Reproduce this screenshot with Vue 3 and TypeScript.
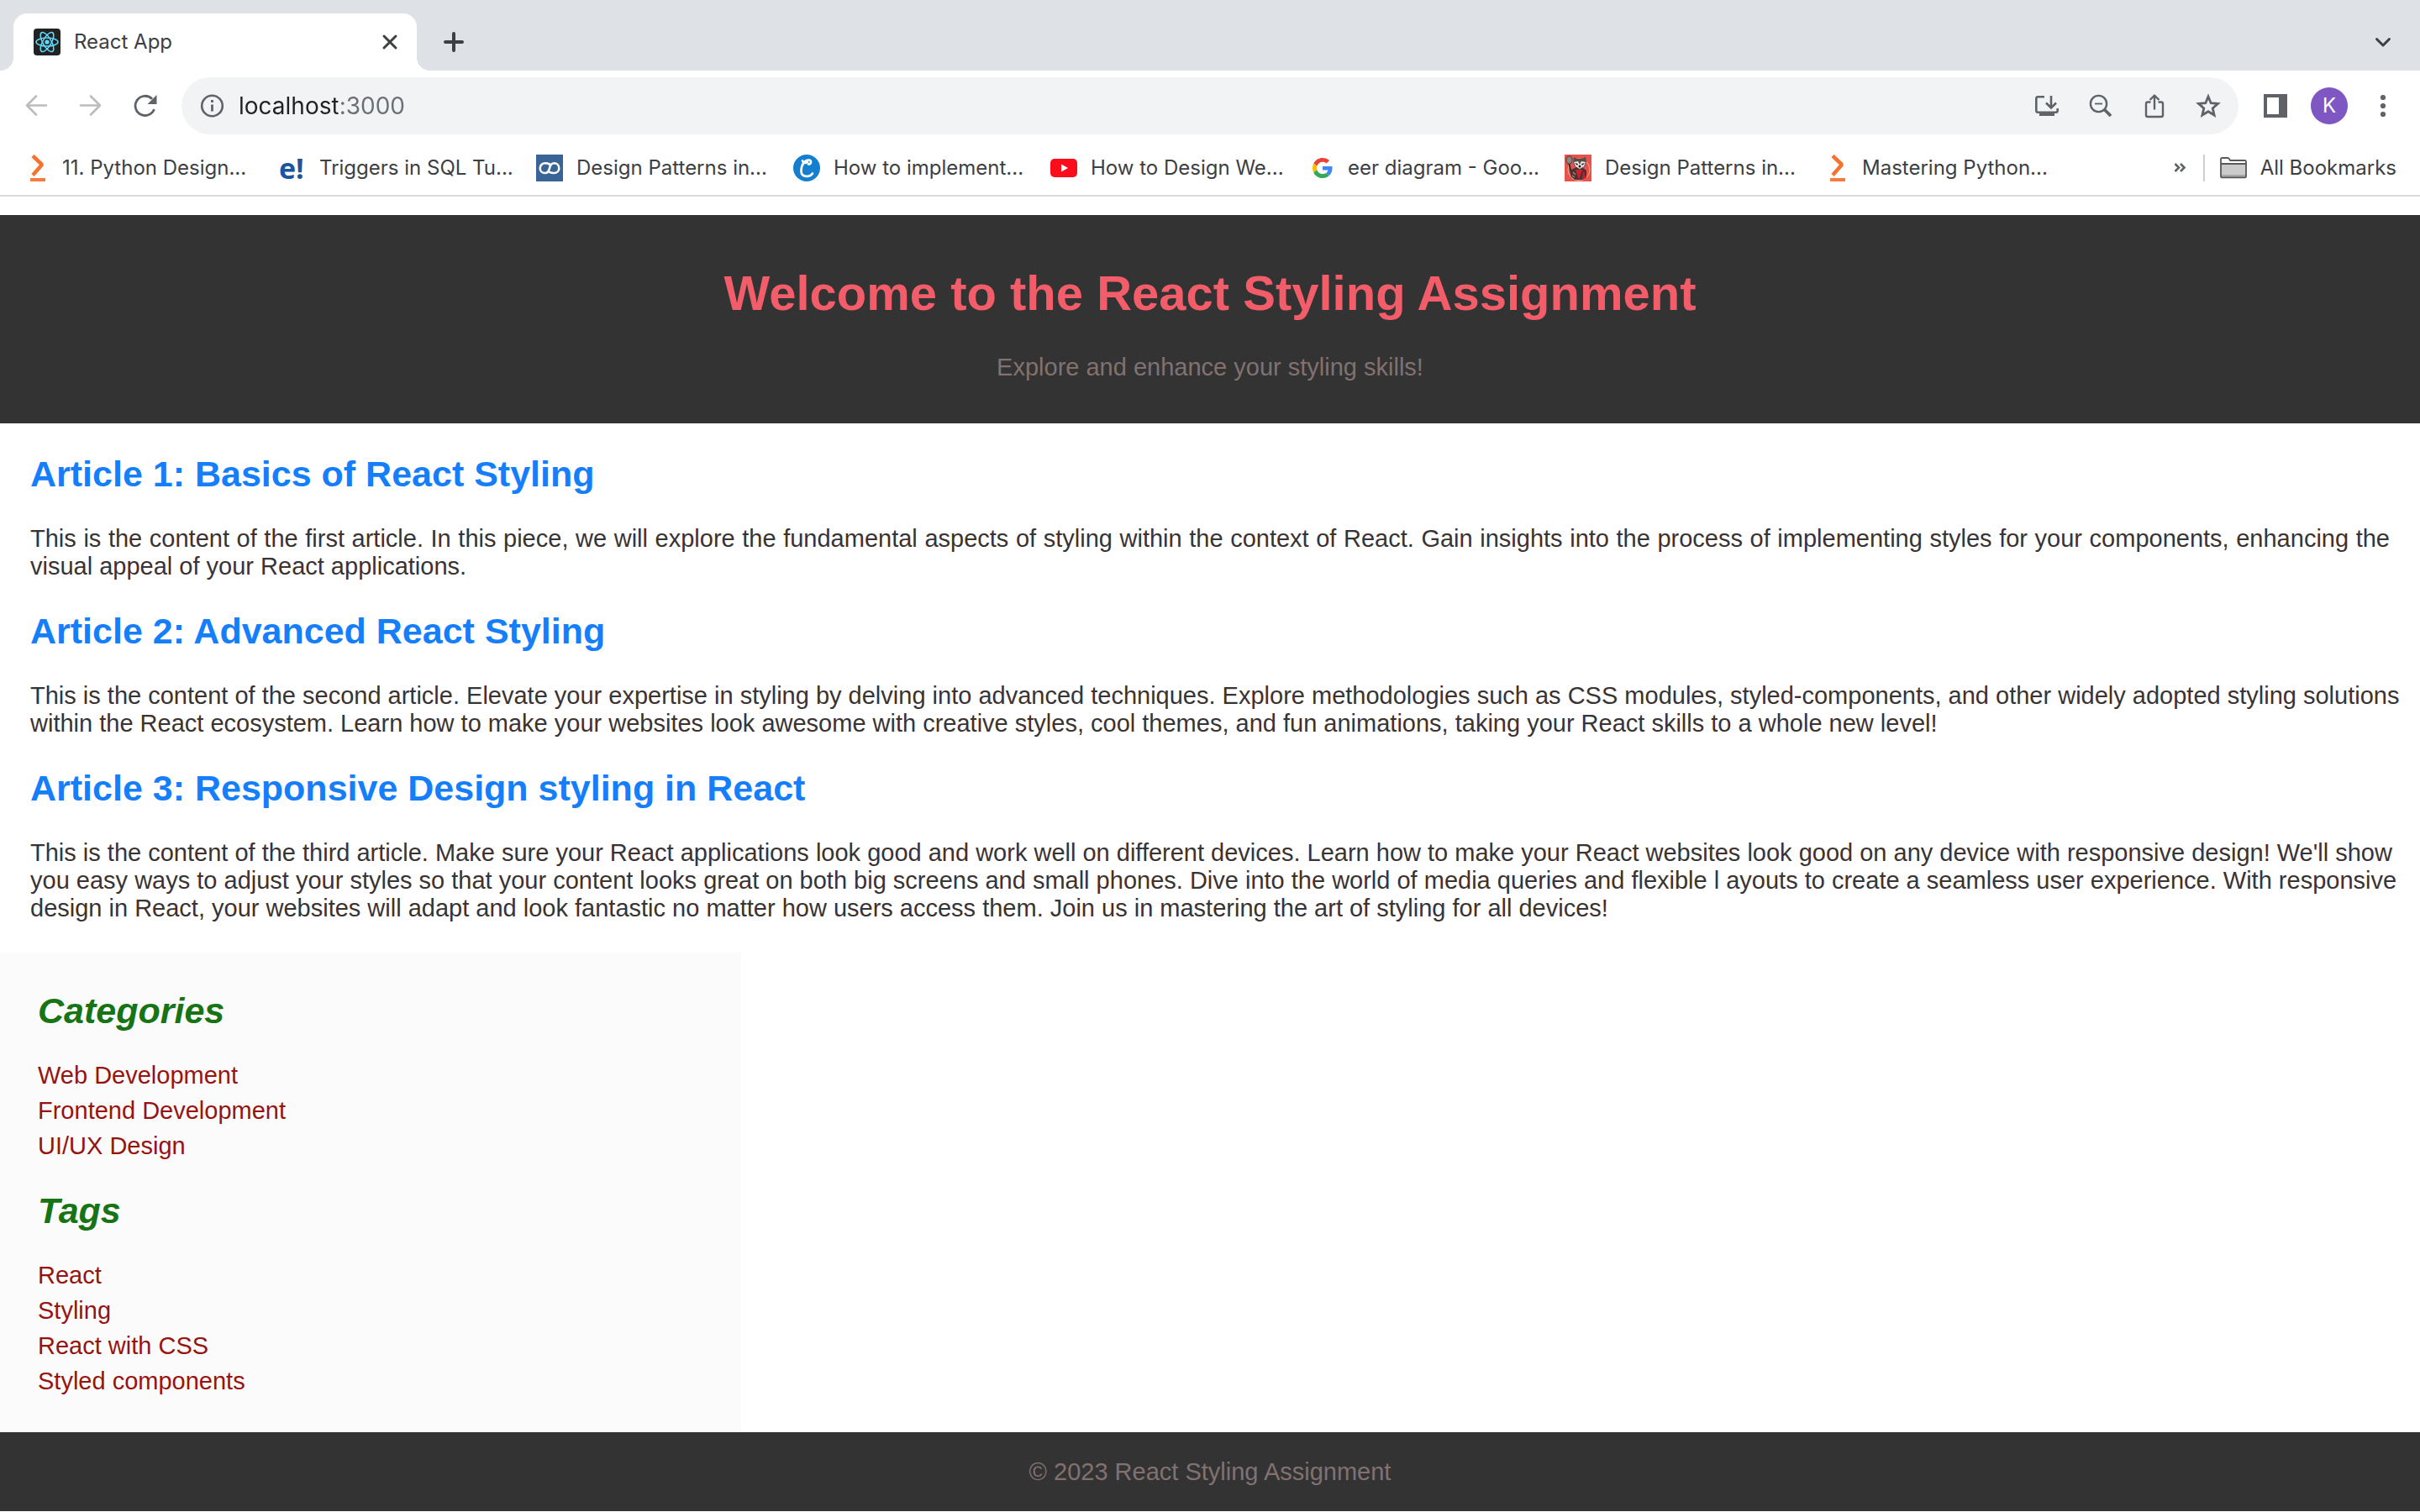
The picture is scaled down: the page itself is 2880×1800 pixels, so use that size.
<script setup lang="ts">
import { ref } from 'vue'

interface Bookmark {
  icon: 'scaler' | 'educative' | 'infinity' | 'coding' | 'youtube' | 'google' | 'raccoon'
  label: string
}

interface Article {
  title: string
  lines: string[]
}

interface LinkGroup {
  title: string
  items: string[]
}

const address = ref('localhost:3000')

const bookmarks: Bookmark[] = [
  { icon: 'scaler', label: '11. Python Design...' },
  { icon: 'educative', label: 'Triggers in SQL Tu...' },
  { icon: 'infinity', label: 'Design Patterns in...' },
  { icon: 'coding', label: 'How to implement...' },
  { icon: 'youtube', label: 'How to Design We...' },
  { icon: 'google', label: 'eer diagram - Goo...' },
  { icon: 'raccoon', label: 'Design Patterns in...' },
  { icon: 'scaler', label: 'Mastering Python...' },
]

const articles: Article[] = [
  {
    title: 'Article 1: Basics of React Styling',
    lines: [
      'This is the content of the first article. In this piece, we will explore the fundamental aspects of styling within the context of React. Gain insights into the process of implementing styles for your components, enhancing the ',
      'visual appeal of your React applications.',
    ],
  },
  {
    title: 'Article 2: Advanced React Styling',
    lines: [
      'This is the content of the second article. Elevate your expertise in styling by delving into advanced techniques. Explore methodologies such as CSS modules, styled-components, and other widely adopted styling solutions ',
      'within the React ecosystem. Learn how to make your websites look awesome with creative styles, cool themes, and fun animations, taking your React skills to a whole new level!',
    ],
  },
  {
    title: 'Article 3: Responsive Design styling in React',
    lines: [
      "This is the content of the third article. Make sure your React applications look good and work well on different devices. Learn how to make your React websites look good on any device with responsive design! We'll show ",
      'you easy ways to adjust your styles so that your content looks great on both big screens and small phones. Dive into the world of media queries and flexible l ayouts to create a seamless user experience. With responsive ',
      'design in React, your websites will adapt and look fantastic no matter how users access them. Join us in mastering the art of styling for all devices!',
    ],
  },
]

const groups: LinkGroup[] = [
  { title: 'Categories', items: ['Web Development', 'Frontend Development', 'UI/UX Design'] },
  { title: 'Tags', items: ['React', 'Styling', 'React with CSS', 'Styled components'] },
]
</script>

<template>
  <div class="browser">
    <div class="tabstrip">
      <div class="tab">
        <svg class="icon" viewBox="0 0 32 32" fill="none" aria-hidden="true">
          <rect width="32" height="32" rx="4" fill="#222" />
          <g stroke="#61dafb" stroke-width="1.5">
            <ellipse cx="16" cy="16" rx="13" ry="5" />
            <ellipse cx="16" cy="16" rx="13" ry="5" transform="rotate(60 16 16)" />
            <ellipse cx="16" cy="16" rx="13" ry="5" transform="rotate(120 16 16)" />
          </g>
          <circle cx="16" cy="16" r="2.6" fill="#61dafb" />
        </svg>
        <span class="tab-title">React App</span>
        <button class="tab-close" type="button" aria-label="Close tab">
          <svg class="icon" viewBox="0 0 32 32" fill="none" stroke="#3c4043" stroke-width="3" stroke-linecap="round" aria-hidden="true">
            <path d="M9 9L23 23M23 9L9 23" />
          </svg>
        </button>
      </div>
      <button class="tool" type="button" aria-label="New tab">
        <svg class="icon" viewBox="0 0 32 32" fill="none" stroke="#3c4043" stroke-width="4" stroke-linecap="round" aria-hidden="true">
          <path d="M16 6V26M6 16H26" />
        </svg>
      </button>
      <button class="tool push" type="button" aria-label="Search tabs">
        <svg class="icon" viewBox="0 0 32 32" fill="none" stroke="#3c4043" stroke-width="3" stroke-linecap="round" stroke-linejoin="round" aria-hidden="true">
          <path d="M8.500 12.500L16 20L23.500 12.500" />
        </svg>
      </button>
    </div>

    <div class="toolbar">
      <button class="tool" type="button" aria-label="Back">
        <svg class="icon" viewBox="0 0 32 32" fill="none" stroke="#babcbe" stroke-width="2.600" stroke-linecap="round" stroke-linejoin="round" aria-hidden="true">
          <path d="M27 15.500H4M15 4.500L4 15.500L15 26.500" />
        </svg>
      </button>
      <button class="tool" type="button" aria-label="Forward">
        <svg class="icon" viewBox="0 0 32 32" fill="none" stroke="#babcbe" stroke-width="2.600" stroke-linecap="round" stroke-linejoin="round" aria-hidden="true">
          <path d="M4 15.500H27M16 4.500L27 15.500L16 26.500" />
        </svg>
      </button>
      <button class="tool" type="button" aria-label="Reload">
        <svg class="icon" viewBox="0 0 32 32" fill="none" aria-hidden="true">
          <path d="M27.500 20A11.600 11.600 0 1 1 25 7.800" stroke="#5f6368" stroke-width="2.800" />
          <path d="M30.500 3V14H19.500Z" fill="#5f6368" />
        </svg>
      </button>

      <div class="omnibox">
        <svg class="icon" viewBox="0 0 32 32" fill="none" aria-hidden="true">
          <circle cx="16.500" cy="16" r="12.300" stroke="#5f6368" stroke-width="2.600" />
          <path d="M16.500 14.500V22.500" stroke="#5f6368" stroke-width="2.800" />
          <path d="M16.500 9V12" stroke="#5f6368" stroke-width="2.800" />
        </svg>
        <input v-model="address" class="address" type="text" aria-label="Address" spellcheck="false" />
        <button class="tool" type="button" aria-label="Install app">
          <svg class="icon" viewBox="0 0 32 32" fill="none" stroke="#5f6368" stroke-width="2.600" aria-hidden="true">
            <path d="M13 5.300H5.500Q3.300 5.300 3.300 7.500V21.500Q3.300 23.700 5.500 23.700H26.500Q28.700 23.700 28.700 21.500V19" />
            <path d="M21 4V18M15 12.500L21 18.500L27 12.500" />
            <path d="M7 26H25" stroke-width="4" />
          </svg>
        </button>
        <button class="tool" type="button" aria-label="Zoom out">
          <svg class="icon" viewBox="0 0 32 32" fill="none" stroke="#5f6368" aria-hidden="true">
            <circle cx="13.500" cy="13.500" r="9.600" stroke-width="2.400" />
            <path d="M9 13.500H18" stroke-width="1.800" />
            <path d="M20 20L28 28" stroke-width="3.800" />
          </svg>
        </button>
        <button class="tool" type="button" aria-label="Share">
          <svg class="icon" viewBox="0 0 32 32" fill="none" stroke="#5f6368" stroke-width="2.400" stroke-linejoin="round" aria-hidden="true">
            <path d="M11.500 11.500H8Q6 11.500 6 13.500V27Q6 29 8 29H24Q26 29 26 27V13.500Q26 11.500 24 11.500H20.500" />
            <path d="M16 20.500V4M10.500 9L16 3.600L21.500 9" />
          </svg>
        </button>
        <button class="tool" type="button" aria-label="Bookmark this tab">
          <svg class="icon" viewBox="0 0 32 32" fill="none" stroke="#5f6368" stroke-width="2.800" aria-hidden="true">
            <path d="M16 5L19.200 12.700L27.500 13.400L21.200 18.900L23.100 27L16 22.700L8.900 27L10.800 18.900L4.500 13.400L12.800 12.700Z" />
          </svg>
        </button>
      </div>

      <div class="actions">
        <button class="tool" type="button" aria-label="Side panel">
          <svg class="icon" viewBox="0 0 32 32" aria-hidden="true">
            <path d="M2 2H30V30H2ZM6 6V26H20V6Z" fill="#5f6368" fill-rule="evenodd" />
          </svg>
        </button>
        <button class="tool" type="button" aria-label="Profile"><span class="avatar">K</span></button>
        <button class="tool" type="button" aria-label="Menu">
          <svg class="icon" viewBox="0 0 32 32" fill="#5f6368" aria-hidden="true">
            <circle cx="16" cy="6" r="3.100" /><circle cx="16" cy="16" r="3.100" /><circle cx="16" cy="26" r="3.100" />
          </svg>
        </button>
      </div>
    </div>

    <nav class="bookmarks" aria-label="Bookmarks">
      <a v-for="(mark, index) in bookmarks" :key="index" class="bookmark" href="#">
        <svg v-if="mark.icon === 'scaler'" class="icon" viewBox="0 0 32 32" fill="none" aria-hidden="true">
          <path d="M13 1.500L24 12L13 24.500" stroke="#f5732f" stroke-width="4.500" stroke-linejoin="bevel" />
          <path d="M10 30H28" stroke="#f67b3e" stroke-width="4" />
        </svg>
        <span v-else-if="mark.icon === 'educative'" class="icon wordmark" aria-hidden="true">e!</span>
        <svg v-else-if="mark.icon === 'infinity'" class="icon" viewBox="0 0 32 32" fill="none" aria-hidden="true">
          <rect width="32" height="32" fill="#3a6496" />
          <path d="M16 11.500C14.500 10.700 12.800 10.300 10.800 10.300C7.300 10.300 4.700 12.800 4.700 16.200C4.700 19.600 7.300 22 10.500 22C14.500 22 15.500 18.500 16 16.200C16.500 13.900 17.500 10.300 21.500 10.300C24.700 10.300 27.300 12.800 27.300 16.200C27.300 19.600 24.700 22 21.200 22C19.200 22 17.500 21.700 16 20.900" stroke="#fff" stroke-width="2.600" stroke-linecap="round" />
        </svg>
        <svg v-else-if="mark.icon === 'coding'" class="icon" viewBox="0 0 32 32" fill="none" aria-hidden="true">
          <circle cx="16" cy="16" r="16" fill="#147fcf" />
          <path d="M23 22.500C20 27 9.500 28 9.500 19.500C9.500 12 13.500 6.500 18.500 6.500C22.500 6.500 21.500 11.500 18 11.500M11 7.500C12 10.500 15 10.500 17 9" stroke="#fff" stroke-width="2.700" stroke-linecap="round" />
        </svg>
        <svg v-else-if="mark.icon === 'youtube'" class="icon" viewBox="0 0 32 32" aria-hidden="true">
          <rect y="5" width="32" height="22" rx="5" fill="#fc0d1b" />
          <path d="M13 11.500L21 16L13 20.500Z" fill="#fff" />
        </svg>
        <svg v-else-if="mark.icon === 'google'" class="icon" viewBox="-12 -8 64 64" aria-hidden="true">
          <path fill="#ea4335" d="M24 9.500c3.540 0 6.710 1.220 9.210 3.600l6.850-6.850C35.900 2.380 30.470 0 24 0 14.620 0 6.510 5.380 2.560 13.220l7.980 6.190C12.430 13.720 17.740 9.500 24 9.500z" />
          <path fill="#4285f4" d="M46.980 24.550c0-1.570-.15-3.090-.38-4.550H24v9.020h12.940c-.58 2.960-2.260 5.480-4.780 7.180l7.730 6c4.510-4.180 7.090-10.360 7.090-17.650z" />
          <path fill="#fbbc05" d="M10.530 28.590c-.48-1.450-.76-2.990-.76-4.590s.27-3.140.76-4.590l-7.980-6.190C.92 16.460 0 20.120 0 24s.92 7.540 2.560 10.780l7.970-6.190z" />
          <path fill="#34a853" d="M24 48c6.480 0 11.930-2.130 15.890-5.810l-7.730-6c-2.150 1.450-4.920 2.300-8.160 2.300-6.260 0-11.570-4.220-13.470-9.910l-7.980 6.190C6.510 42.620 14.620 48 24 48z" />
        </svg>
        <svg v-else class="icon" viewBox="0 0 32 32" fill="none" aria-hidden="true">
          <rect width="32" height="32" fill="#e5534c" />
          <circle cx="17" cy="18" r="13" stroke="#f3a98e" stroke-width="1" />
          <path d="M5 9L9 27" stroke="#3a2c2c" stroke-width="2" />
          <ellipse cx="5.500" cy="6.500" rx="3.500" ry="4.500" fill="#8d8580" stroke="#4a3836" stroke-width="1" />
          <path d="M8 18L14 15H21L26 19L26 26L22 30H12L8 26Z" fill="#4a3335" />
          <path d="M13 18L17 30L21 18Z" fill="#d3202c" />
          <path d="M22 19L26 28L21 30Z" fill="#c81f2a" />
          <path d="M11 3L15 5H20L25 3L26 9L24 14L18 18L12 14L10 9Z" fill="#5a4e4d" />
          <path d="M11 9L16 8L18 12L20 8L25 9L23 14L18 17L13 14Z" fill="#efe9e5" />
          <path d="M12 10L16 11L15 13ZM24 10L20 11L21 13Z" fill="#1f191a" />
          <circle cx="18" cy="14" r="1.500" fill="#1f191a" />
          <path d="M10 21L13 24M9 25L12 27" stroke="#958882" stroke-width="1.500" />
        </svg>
        <span>{{ mark.label }}</span>
      </a>
      <button class="more" type="button" aria-label="More bookmarks">
        <svg class="icon" viewBox="0 0 32 32" fill="none" stroke="#5f6368" stroke-width="2.600" aria-hidden="true">
          <path d="M10.500 11L15 15.500L10.500 20M17 11L21.500 15.500L17 20" />
        </svg>
      </button>
      <span class="divider"></span>
      <a class="all" href="#">
        <svg class="icon" viewBox="0 0 32 32" fill="none" stroke-width="1.800" stroke-linejoin="round" aria-hidden="true">
          <path d="M1 26V5.500Q1 4 2.500 4H9Q10.500 4 11 5.200L12 7H29.500Q31 7 31 8.500V26Q31 27.300 29.500 27.300H2.500Q1 27.300 1 26Z" fill="#fff" />
          <path d="M1 11H31V27H1Z" fill="#cbcbcb" />
          <path d="M1 24H31V27H1Z" fill="#a8a8a8" />
          <path d="M1 26V5.500Q1 4 2.500 4H9Q10.500 4 11 5.200L12 7H29.500Q31 7 31 8.500V26Q31 27.300 29.500 27.300H2.500Q1 27.300 1 26ZM1 11H31" stroke="#58585a" />
        </svg>
        <span>All Bookmarks</span>
      </a>
    </nav>
  </div>

  <div class="page">
    <header class="hero">
      <h1>Welcome to the React Styling Assignment</h1>
      <p>Explore and enhance your styling skills!</p>
    </header>

    <main class="articles">
      <article v-for="article in articles" :key="article.title">
        <h2>{{ article.title }}</h2>
        <p><span v-for="line in article.lines" :key="line" class="line">{{ line }}</span></p>
      </article>
    </main>

    <aside class="sidebar">
      <section v-for="group in groups" :key="group.title">
        <h2>{{ group.title }}</h2>
        <ul>
          <li v-for="item in group.items" :key="item">{{ item }}</li>
        </ul>
      </section>
    </aside>

    <footer class="footer">
      <p>© 2023 React Styling Assignment</p>
    </footer>
  </div>
</template>

<style>
body {
  margin: 0;
  background: #fff;
}
</style>

<style scoped>
.browser {
  font-family: Inter, "Liberation Sans", sans-serif;
  font-size: 24px;
  line-height: 32px;
  color: #3c4043;
  border-bottom: 2px solid #dadada;
}

button {
  border: 0;
  padding: 0;
  background: none;
  font: inherit;
  color: inherit;
}

a {
  color: inherit;
  text-decoration: none;
}

.icon {
  display: block;
  flex: none;
  width: 32px;
  height: 32px;
}

.tool {
  display: flex;
  flex: none;
  align-items: center;
  justify-content: center;
  width: 64px;
  height: 68px;
}

.tabstrip {
  display: flex;
  align-items: center;
  gap: 12px;
  padding: 16px 12px 0 16px;
  background: #dee1e6;
}

.tab {
  position: relative;
  display: flex;
  align-items: center;
  box-sizing: border-box;
  width: 480px;
  height: 68px;
  padding: 0 16px 0 24px;
  gap: 16px;
  border-radius: 16px 16px 0 0;
  background: #fff;
}

.tab::before,
.tab::after {
  content: "";
  position: absolute;
  bottom: 0;
  width: 16px;
  height: 16px;
}

.tab::before {
  right: 100%;
  background: radial-gradient(circle at 0 0, transparent 16px, #fff 16px);
}

.tab::after {
  left: 100%;
  background: radial-gradient(circle at 100% 0, transparent 16px, #fff 16px);
}

.tab-title {
  flex: 1;
}

.push {
  margin-left: auto;
}

.toolbar {
  display: flex;
  align-items: center;
  padding: 8px 12px;
}

.omnibox {
  display: flex;
  flex: 1;
  align-items: center;
  min-width: 0;
  margin: 0 12px;
  padding: 0 4px 0 20px;
  border-radius: 34px;
  background: #f1f3f4;
}

.address {
  flex: 1;
  min-width: 0;
  margin-left: 16px;
  padding: 0;
  border: 0;
  outline: 0;
  font: inherit;
  font-size: 28px;
  line-height: 36px;
  color: #202124;
  /* Host in near-black, port in grey */
  background: linear-gradient(90deg, #202124 118px, #6b6e72 118px);
  background-clip: text;
  -webkit-text-fill-color: transparent;
}

.actions {
  display: flex;
}

.avatar {
  width: 44px;
  border-radius: 50%;
  background: #7e57c2;
  color: #fff;
  line-height: 44px;
  text-align: center;
}

.bookmarks {
  display: flex;
  align-items: center;
  height: 64px;
  padding: 0 28px 0 26px;
  white-space: nowrap;
}

.bookmark {
  display: flex;
  flex: none;
  align-items: center;
  gap: 16px;
  width: 306px;
}

.wordmark {
  font-family: "Open Sans", sans-serif;
  font-size: 34px;
  font-weight: 700;
  color: #1c559c;
}

.more {
  margin-left: auto;
}

.divider {
  width: 2px;
  height: 32px;
  margin: 0 18px 0 12px;
  background: #cfcfcf;
}

.all {
  display: flex;
  align-items: center;
  gap: 16px;
}

.page {
  margin-top: 22px;
  font-family: "Liberation Sans", Arial, sans-serif;
  font-size: 29px;
  line-height: 33px;
  color: #3a3333;
}

h1,
h2,
p,
ul {
  margin: 0;
  padding: 0;
}

.hero {
  padding: 60px 36px 50px;
  background: #333;
  color: #827171;
  text-align: center;
}

h1 {
  margin-bottom: 39px;
  font-size: 58px;
  line-height: 66px;
  color: #f35d69;
}

h2 {
  margin-bottom: 36px;
  font-size: 43px;
  line-height: 50px;
}

.articles {
  display: flex;
  flex-direction: column;
  gap: 35px;
  padding: 35px 36px 36px;
  text-align: justify;
}

.articles h2 {
  color: #147efb;
}

/* Wide windows keep the written line breaks; narrower ones reflow freely */
@media (min-width: 2800px) {
  .line {
    display: block;
    white-space: nowrap;
    text-align-last: justify;
  }

  .line:last-child {
    text-align-last: left;
  }
}

.sidebar {
  display: flex;
  flex-direction: column;
  gap: 35px;
  width: 30%;
  padding: 44px 9px;
  background: #fbfbfb;
}

.sidebar section {
  padding: 0 36px;
}

.sidebar h2 {
  font-style: italic;
  color: #167415;
}

ul {
  display: flex;
  flex-direction: column;
  gap: 9px;
  list-style: none;
  color: #971310;
}

.footer {
  padding: 31px 36px 30px;
  background: #333;
  color: #827171;
  text-align: center;
}
</style>
